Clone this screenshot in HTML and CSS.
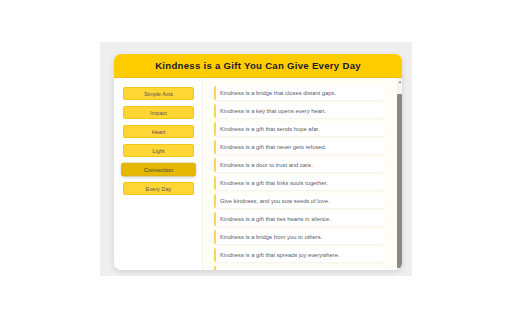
FILE: index.html
```html
<!DOCTYPE html>
<html>
<head>
<meta charset="utf-8">
<link rel="stylesheet" href="styles.css">
</head>
<body>
<div class="stage">
  <div class="frame">
    <div class="card">
      <div class="header">Kindness is a Gift You Can Give Every Day</div>
      <div class="main">
        <nav class="sidebar">
          <button class="btn">Simple Acts</button>
          <button class="btn">Impact</button>
          <button class="btn">Heart</button>
          <button class="btn">Light</button>
          <button class="btn active">Connection</button>
          <button class="btn">Every Day</button>
        </nav>
        <div class="content">
          <div class="item">Kindness is a bridge that closes distant gaps.</div>
          <div class="item">Kindness is a key that opens every heart.</div>
          <div class="item">Kindness is a gift that sends hope afar.</div>
          <div class="item">Kindness is a gift that never gets refused.</div>
          <div class="item">Kindness is a door to trust and care.</div>
          <div class="item">Kindness is a gift that links souls together.</div>
          <div class="item">Give kindness, and you sow seeds of love.</div>
          <div class="item">Kindness is a gift that ties hearts in silence.</div>
          <div class="item">Kindness is a bridge from you to others.</div>
          <div class="item">Kindness is a gift that spreads joy everywhere.</div>
          <div class="item"></div>
        </div>
        <div class="scrollbar">
          <div class="arrow"></div>
          <div class="thumb"></div>
        </div>
      </div>
    </div>
  </div>
</div>
</body>
</html>
```
FILE: styles.css
```css
html, body {
  margin: 0;
  padding: 0;
  background: #ffffff;
  font-family: "Liberation Sans", Arial, sans-serif;
}
.stage {
  width: 512px;
  height: 320px;
  display: flex;
  align-items: flex-start;
  justify-content: center;
  padding-top: 42px;
  box-sizing: border-box;
}
.frame {
  width: 312px;
  height: 234px;
  background: #efefef;
  box-sizing: border-box;
  padding: 12px 10px 6px 14px;
}
.card {
  height: 100%;
  background: #ffffff;
  border-radius: 7px;
  box-shadow: 0 2px 6px rgba(0,0,0,0.12);
  overflow: hidden;
  display: flex;
  flex-direction: column;
}
.header {
  height: 24px;
  flex: none;
  background: #ffcc00;
  border-bottom: 1px solid #e8c21a;
  color: #1a1a2e;
  font-weight: bold;
  font-size: 9.6px;
  letter-spacing: 0.28px;
  display: flex;
  align-items: center;
  justify-content: center;
  box-sizing: border-box;
}
.main {
  flex: 1;
  display: flex;
  min-height: 0;
}
.sidebar {
  width: 89px;
  flex: none;
  border-right: 1px solid #f0f0f0;
  box-sizing: border-box;
  padding: 9px 9px;
  display: flex;
  flex-direction: column;
  gap: 6px;
}
.btn {
  height: 13px;
  width: 71px;
  margin: 0;
  padding: 0;
  background: #ffd633;
  border: 1px solid #f5c518;
  border-radius: 2px;
  color: #555555;
  font-family: "Liberation Sans", Arial, sans-serif;
  font-size: 5.6px;
  box-sizing: border-box;
}
.btn.active {
  background: #e6b800;
  border-color: #dcae00;
  color: #444444;
  transform: scale(1.05);
  box-shadow: 0 1px 3px rgba(0,0,0,0.2);
}
.content {
  flex: 1;
  background: #fffdf5;
  overflow: hidden;
  padding: 8px 13px 0 11px;
  display: flex;
  flex-direction: column;
  gap: 4px;
}
.item {
  flex: none;
  height: 14px;
  background: #ffffff;
  border-left: 2px solid #ffd54f;
  border-radius: 2px;
  box-shadow: 0 1px 2px rgba(0,0,0,0.05);
  box-sizing: border-box;
  padding-left: 4px;
  display: flex;
  align-items: center;
  color: #565a66;
  font-size: 5.8px;
}
.scrollbar {
  width: 5px;
  flex: none;
  background: #f4f4f4;
  display: flex;
  flex-direction: column;
  align-items: center;
  padding-bottom: 2px;
  box-sizing: border-box;
}
.arrow {
  width: 0;
  height: 0;
  margin-top: 3px;
  border-left: 1.5px solid transparent;
  border-right: 1.5px solid transparent;
  border-bottom: 2px solid #505050;
}
.thumb {
  width: 5px;
  flex: 1;
  margin-top: 11px;
  background: #888888;
  border-radius: 1px;
}
```
